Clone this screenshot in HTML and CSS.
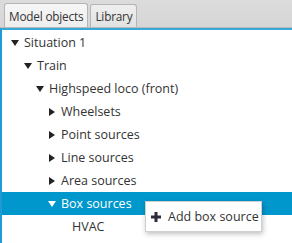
FILE: index.html
```html
<!DOCTYPE html>
<html>
<head>
<meta charset="utf-8">
<link rel="stylesheet" href="styles.css">
</head>
<body>
<div class="pane">
  <div class="tabbar">
    <div class="tab active">Model objects</div>
    <div class="tab">Library</div>
  </div>
  <div class="tree">
    <div class="row l0"><span class="arrow down"></span><span>Situation 1</span></div>
    <div class="row l1"><span class="arrow down"></span><span>Train</span></div>
    <div class="row l2"><span class="arrow down"></span><span>Highspeed loco (front)</span></div>
    <div class="row l3"><span class="arrow right"></span><span>Wheelsets</span></div>
    <div class="row l3"><span class="arrow right"></span><span>Point sources</span></div>
    <div class="row l3"><span class="arrow right"></span><span>Line sources</span></div>
    <div class="row l3"><span class="arrow right"></span><span>Area sources</span></div>
    <div class="row l3 selected"><span class="arrow down"></span><span>Box sources</span></div>
    <div class="row l4"><span>HVAC</span></div>
  </div>
  <div class="menu">
    <svg class="plus" width="10" height="10" viewBox="0 0 10 10"><path d="M3.5 0h3v3.5H10v3H6.5V10h-3V6.5H0v-3h3.5z" fill="#2f2b3a"/></svg>
    <span>Add box source</span>
  </div>
</div>
</body>
</html>
```
FILE: styles.css
```css
html, body {
  margin: 0;
  padding: 0;
  background: #fff;
}
body {
  font-family: "Open Sans", "Liberation Sans", sans-serif;
  font-size: 12.5px;
  color: #333;
  width: 292px;
  height: 243px;
  overflow: hidden;
}
.pane {
  position: relative;
  height: 243px;
}
.tabbar {
  height: 27px;
  background: linear-gradient(#dcdcdc, #d6d6d6);
  display: flex;
  align-items: flex-end;
  padding-left: 4px;
  gap: 2px;
  border-bottom: 1px solid #b9b9b9;
}
.tab {
  height: 22px;
  line-height: 22px;
  padding: 0 4px;
  font-size: 11.8px;
  letter-spacing: -0.2px;
  border: 1px solid #b5b5b5;
  border-bottom: none;
  border-radius: 3px 3px 0 0;
  background: linear-gradient(#efefef, #e2e2e2);
  color: #333;
}
.tab.active {
  height: 23px;
  line-height: 24px;
  background: linear-gradient(#f6f6f6, #eeeeee);
}
.tree {
  border-top: 2px solid #3aa7d9;
  border-left: 2px solid #1f9bd3;
  padding-top: 1px;
  box-sizing: border-box;
  height: 215px;
}
.row {
  height: 23px;
  display: flex;
  align-items: center;
  white-space: nowrap;
}
.row.selected {
  background: #0097cc;
  color: #fff;
}
.l0 { padding-left: 9px; }
.l1 { padding-left: 22px; }
.l2 { padding-left: 34px; }
.l3 { padding-left: 46px; }
.l4 { padding-left: 70px; }
.arrow {
  width: 8px;
  height: 7px;
  margin-right: 5px;
  position: relative;
  flex: none;
}
.arrow.down::before {
  content: "";
  position: absolute;
  left: 0;
  top: 1px;
  border-left: 4px solid transparent;
  border-right: 4px solid transparent;
  border-top: 6px solid #222;
}
.arrow.right::before {
  content: "";
  position: absolute;
  left: 1px;
  top: 0;
  border-top: 4px solid transparent;
  border-bottom: 4px solid transparent;
  border-left: 6px solid #222;
}
.selected .arrow.down::before {
  border-top-color: #fff;
}
.menu {
  position: absolute;
  left: 145px;
  top: 201px;
  width: 117px;
  height: 31px;
  box-sizing: border-box;
  background: #fff;
  border: 1px solid #cfcfcf;
  box-shadow: 1px 2px 5px rgba(0, 0, 0, 0.25);
  display: flex;
  align-items: center;
  padding-left: 5px;
  gap: 7px;
  color: #333;
}
.plus { flex: none; }
```
